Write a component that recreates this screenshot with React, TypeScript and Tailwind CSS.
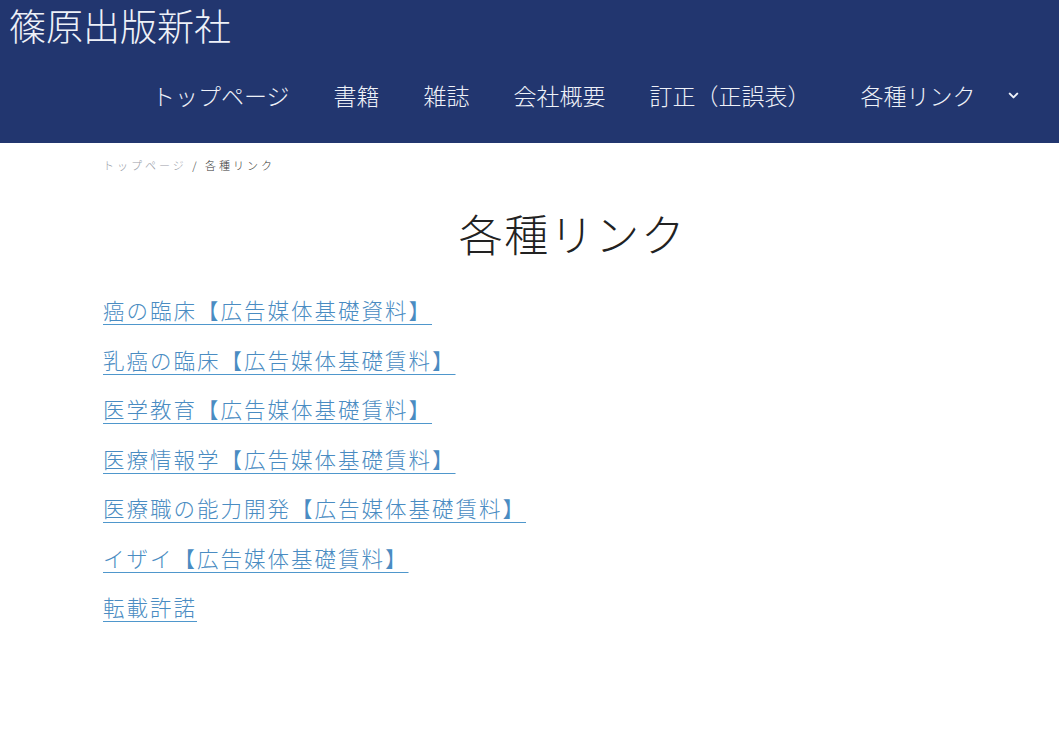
import { ChevronDown } from "lucide-react";

const navItems = ["トップページ", "書籍", "雑誌", "会社概要", "訂正（正誤表）"];

const links = [
  "癌の臨床【広告媒体基礎資料】",
  "乳癌の臨床【広告媒体基礎賃料】",
  "医学教育【広告媒体基礎賃料】",
  "医療情報学【広告媒体基礎賃料】",
  "医療職の能力開発【広告媒体基礎賃料】",
  "イザイ【広告媒体基礎賃料】",
  "転載許諾",
];

export default function App() {
  return (
    <div className="min-h-[745px] bg-white font-['Noto_Sans_CJK_JP',sans-serif]">
      <header className="h-[143px] bg-[#22366f] text-[#eef1f8]">
        <div className="pl-[9px] text-[37px] leading-[50px] font-light">篠原出版新社</div>
        <nav className="mt-[30px] flex items-center pl-[152px]">
          <ul className="flex items-center gap-[44px] text-[23px] leading-[30px] font-light">
            {navItems.map((item) => (
              <li key={item} className="whitespace-nowrap">
                {item}
              </li>
            ))}
            <li className="ml-[6px] flex items-center whitespace-nowrap">
              各種リンク
              <ChevronDown className="ml-[30px] h-[15px] w-[15px]" strokeWidth={3.2} />
            </li>
          </ul>
        </nav>
      </header>

      <main className="px-[103px]">
        <div className="pt-[13px] text-[11px] leading-[18px] tracking-[3px] font-light">
          <span className="text-[#9aa0aa]">トップページ</span>
          <span className="text-[#333]"> / 各種リンク</span>
        </div>

        <h1 className="mt-[29px] pl-[86px] text-center text-[44px] leading-[60px] font-light tracking-[1.5px] text-[#222]">
          各種リンク
        </h1>

        <ul className="mt-[33px] flex flex-col gap-[21px]">
          {links.map((l) => (
            <li key={l} className="text-[21.5px] leading-[28.5px] font-light">
              <a
                href="#"
                className="text-[#4a8cc2] underline decoration-[#4f97cc] decoration-1 underline-offset-[5px] tracking-[2px]"
              >
                {l}
              </a>
            </li>
          ))}
        </ul>
      </main>
    </div>
  );
}
